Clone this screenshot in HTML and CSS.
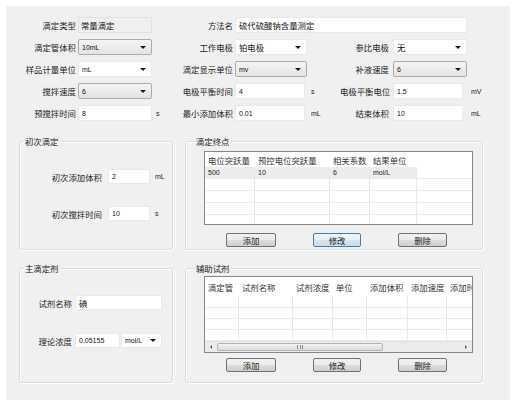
FILE: index.html
```html
<!DOCTYPE html>
<html lang="zh">
<head>
<meta charset="utf-8">
<title>滴定方法</title>
<link rel="stylesheet" href="styles.css">
</head>
<body>
<div class="dialog">
  <div class="form">
    <span class="lbl">滴定类型</span>
    <div class="field disabled">常量滴定</div>
    <span></span>
    <span class="lbl">方法名</span>
    <div class="field wide">硫代硫酸钠含量测定</div>
    <span></span>

    <span class="lbl">滴定管体积</span>
    <div class="field combo list"><span class="lat">10mL</span></div>
    <span></span>
    <span class="lbl">工作电极</span>
    <div class="field combo">铂电极</div>
    <span></span>
    <span class="lbl lbl3">参比电极</span>
    <div class="field combo">无</div>
    <span></span>

    <span class="lbl">样品计量单位</span>
    <div class="field combo"><span class="lat">mL</span></div>
    <span></span>
    <span class="lbl">滴定显示单位</span>
    <div class="field combo list"><span class="lat">mv</span></div>
    <span></span>
    <span class="lbl lbl3">补液速度</span>
    <div class="field combo list"><span class="lat">6</span></div>
    <span></span>

    <span class="lbl">搅拌速度</span>
    <div class="field combo list"><span class="lat">6</span></div>
    <span></span>
    <span class="lbl">电极平衡时间</span>
    <div class="field short"><span class="lat">4</span></div>
    <span class="unit lat">s</span>
    <span class="lbl lbl3">电极平衡电位</span>
    <div class="field short"><span class="lat">1.5</span></div>
    <span class="unit lat">mV</span>

    <span class="lbl">预搅拌时间</span>
    <div class="field"><span class="lat">8</span></div>
    <span class="unit lat">s</span>
    <span class="lbl">最小添加体积</span>
    <div class="field short"><span class="lat">0.01</span></div>
    <span class="unit lat">mL</span>
    <span class="lbl lbl3">结束体积</span>
    <div class="field short"><span class="lat">10</span></div>
    <span class="unit lat">mL</span>
  </div>

  <div class="groups">
    <div class="group g-left">
      <span class="gtitle">初次滴定</span>
      <div class="rows rows-first">
        <span class="lbl">初次添加体积</span>
        <div class="field"><span class="lat">2</span></div>
        <span class="unit lat">mL</span>
        <span class="lbl">初次搅拌时间</span>
        <div class="field"><span class="lat">10</span></div>
        <span class="unit lat">s</span>
      </div>
    </div>

    <div class="group g-right">
      <span class="gtitle">滴定终点</span>
      <div class="table t1">
        <div class="tr thead"><span>电位突跃量</span><span>预控电位突跃量</span><span>相关系数</span><span>结果单位</span><span></span></div>
        <div class="tr sel"><span class="lat">500</span><span class="lat">10</span><span class="lat">6</span><span class="lat">mol/L</span><span></span></div>
        <div class="tr"><span></span><span></span><span></span><span></span><span></span></div>
        <div class="tr"><span></span><span></span><span></span><span></span><span></span></div>
        <div class="tr"><span></span><span></span><span></span><span></span><span></span></div>
        <div class="tr"><span></span><span></span><span></span><span></span><span></span></div>
      </div>
      <div class="btns btns-1">
        <div class="btn b1">添加</div>
        <div class="btn b2 focus">修改</div>
        <div class="btn b3">删除</div>
      </div>
    </div>

    <div class="group g-left">
      <span class="gtitle">主滴定剂</span>
      <div class="rows rows-main">
        <span class="lbl">试剂名称</span>
        <div class="field">碘</div>
        <span class="lbl">理论浓度</span>
        <div class="pair">
          <div class="field conc"><span class="lat">0.05155</span></div>
          <div class="field combo unitcombo"><span class="lat">mol/L</span></div>
        </div>
      </div>
    </div>

    <div class="group g-right">
      <span class="gtitle">辅助试剂</span>
      <div class="table t2">
        <div class="tr thead"><span>滴定管</span><span>试剂名称</span><span>试剂浓度</span><span>单位</span><span>添加体积</span><span>添加速度</span><span>添加时间</span></div>
        <div class="tr r12"><span></span><span></span><span></span><span></span><span></span><span></span><span></span></div>
        <div class="tr"><span></span><span></span><span></span><span></span><span></span><span></span><span></span></div>
        <div class="tr"><span></span><span></span><span></span><span></span><span></span><span></span><span></span></div>
        <div class="tr"><span></span><span></span><span></span><span></span><span></span><span></span><span></span></div>
        <div class="hscroll">
          <span class="sarrow left"></span>
          <span class="thumb"><span class="grip"></span></span>
          <span class="strack"></span>
          <span class="sarrow right"></span>
        </div>
      </div>
      <div class="btns btns-2">
        <div class="btn b1">添加</div>
        <div class="btn b2">修改</div>
        <div class="btn b3">删除</div>
      </div>
    </div>
  </div>
</div>
</body>
</html>
```

FILE: styles.css
```css
* { box-sizing: border-box; }

body {
  margin: 0;
  background: #ffffff;
  font-family: "Noto Sans CJK SC", "Noto Sans", sans-serif;
  font-size: 8.4px;
  color: #222;
}

.lat {
  font-family: "Liberation Sans", "Noto Sans CJK SC", sans-serif;
  font-size: 7px;
}

.dialog {
  margin: 6px;
  width: 504px;
  height: 394px;
  background: #f0f0f0;
  padding-top: 11px;
}

/* top form */
.form {
  display: grid;
  grid-template-columns: 72px 74px 29px 54px 72px 33px 53px 74px 1fr;
  grid-auto-rows: 16px;
  row-gap: 6px;
  align-items: center;
}

.lbl {
  text-align: right;
  padding-right: 2px;
  white-space: nowrap;
  line-height: 12px;
}
.lbl3 { padding-right: 4px; }

.unit { padding-left: 4px; }

.field {
  height: 16px;
  display: flex;
  align-items: center;
  padding-left: 3px;
  background: #ffffff;
  border: 1px solid #e9e9e9;
  white-space: nowrap;
  overflow: hidden;
  color: #111;
}
.field.short { width: 70px; }
.field.wide { grid-column: 5 / 9; }
.field.disabled {
  background: #f0f0f0;
  border-color: #e2e2e2;
  padding-left: 2px;
}

.combo::after {
  content: "";
  margin-left: auto;
  margin-right: 5px;
  border-left: 3px solid transparent;
  border-right: 3px solid transparent;
  border-top: 3px solid #1a1a1a;
}
.combo.list {
  border: 1px solid #acacac;
  border-radius: 2px;
  background: linear-gradient(#f4f4f4, #e4e4e4);
}

/* groups */
.groups {
  display: grid;
  grid-template-columns: 154px 298px;
  grid-template-rows: 109px 115px;
  column-gap: 12px;
  row-gap: 18px;
  margin: 20px 0 0 13px;
}

.group {
  border: 1px solid #d5dfe5;
  border-radius: 3px;
  box-shadow: inset 1px 1px 0 #ffffff, 1px 1px 0 #ffffff;
}

.gtitle {
  display: block;
  width: max-content;
  height: 12px;
  line-height: 12px;
  margin: -7px 0 0 4px;
  padding: 0 1px;
  background: #f0f0f0;
}
.g-right .gtitle { margin-left: 9px; }

.rows {
  display: grid;
  align-items: center;
}
.rows .field { height: 15px; }

.rows-first {
  grid-template-columns: 83px 42px auto;
  grid-auto-rows: 15px;
  column-gap: 5px;
  row-gap: 22px;
  margin-top: 22px;
}
.rows-first .lbl { padding-right: 1px; }
.rows-first .unit { padding-left: 0; }

.rows-main {
  grid-template-columns: 53px 87px;
  grid-auto-rows: 15px;
  column-gap: 2px;
  row-gap: 23px;
  margin-top: 21px;
}
.rows-main .lbl { padding-right: 1px; }

.pair {
  display: flex;
  gap: 1px;
}
.field.conc { width: 45px; }
.field.unitcombo { width: 41px; }

/* tables */
.table {
  width: 269px;
  margin-left: 18px;
  background: #ffffff;
  border: 1px solid #828790;
  overflow: hidden;
}
.tr {
  display: grid;
  height: 12px;
  border-bottom: 1px solid #ececec;
}
.tr > span {
  border-right: 1px solid #e8e8e8;
  padding-left: 3px;
  white-space: nowrap;
  overflow: hidden;
  display: flex;
  align-items: center;
  color: #222;
}
.tr.thead { border-bottom: none; }
.tr.thead > span { border-right: none; color: #333; }

.t1 {
  height: 74px;
  margin-top: 4px;
}
.t1 .tr { grid-template-columns: 50px 75px 40px 47px 1fr; }
.t1 .thead { height: 15px; }
.t1 .sel > span { background: #ececec; }
.t1 .sel > span:last-child { background: #ffffff; }
.t1 .tr > span:last-child { border-right: none; }

.t2 {
  height: 77px;
  margin-top: 2px;
}
.t2 .tr { grid-template-columns: 34px 54px 40px 34px 41px 39px 60px; height: 11px; }
.t2 .thead { height: 19px; }
.t2 .tr.r12 { height: 12px; }
.t2 .tr > span:first-child { padding-left: 3px; }

.hscroll {
  display: flex;
  height: 11px;
  background: #ececec;
  border-top: 1px solid #e2e2e2;
  align-items: stretch;
}
.sarrow {
  width: 12px;
  display: flex;
  align-items: center;
  justify-content: center;
}
.sarrow::before {
  content: "";
  border-top: 2px solid transparent;
  border-bottom: 2px solid transparent;
}
.sarrow.left::before { border-right: 2px solid #555; }
.sarrow.right::before { border-left: 2px solid #555; }
.thumb {
  width: 166px;
  margin: 1px 0;
  border: 1px solid #b3b3b3;
  border-radius: 2px;
  background: linear-gradient(#f3f3f3, #dcdcdc);
  display: flex;
  align-items: center;
  justify-content: center;
}
.grip {
  width: 6px;
  height: 4px;
  background: repeating-linear-gradient(90deg, #8a8a8a 0 1px, transparent 1px 2.5px);
}
.strack { flex: 1; }

/* buttons */
.btns {
  display: flex;
  gap: 37px;
  margin-left: 40px;
}
.btns-1 { margin-top: 8px; }
.btns-2 { margin-top: 5px; }

.btn {
  height: 14px;
  line-height: 12px;
  text-align: center;
  border: 1px solid #707070;
  border-radius: 2px;
  background: linear-gradient(#f2f2f2 0%, #ebebeb 50%, #dddddd 50%, #cfcfcf 100%);
  color: #222;
}
.btn.b1 { width: 50px; }
.btn.b2 { width: 48px; }
.btn.b3 { width: 49px; }
.btn.focus {
  border-color: #3c7fb1;
  background: linear-gradient(#f0f6fa 0%, #e6eff5 50%, #d7e4ee 50%, #ccdce8 100%);
}
```
